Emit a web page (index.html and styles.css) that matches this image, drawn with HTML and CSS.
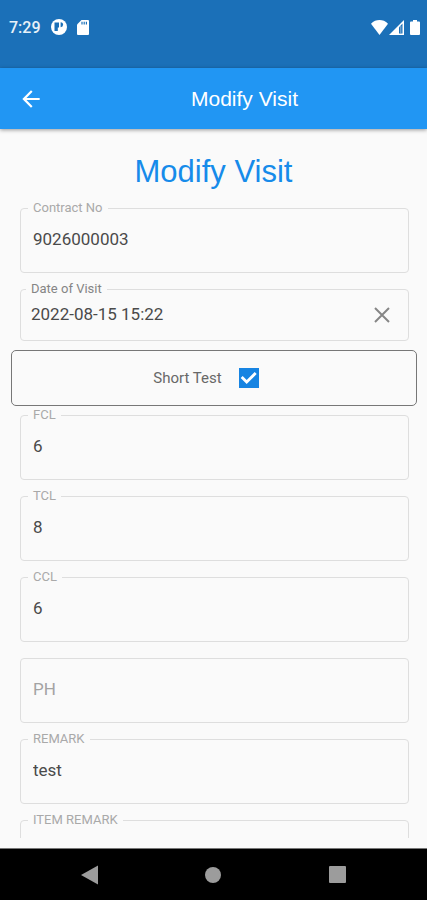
FILE: index.html
```html
<!DOCTYPE html>
<html lang="en">
<head>
<meta charset="utf-8">
<meta name="viewport" content="width=device-width, initial-scale=1">
<title>Modify Visit</title>
<link rel="stylesheet" href="styles.css">
</head>
<body>
<div class="status">
  <span class="time">7:29</span>
  <svg class="status-app" width="16" height="16" viewBox="0 0 16 16" aria-hidden="true"><circle cx="8" cy="8" r="8" fill="#fff"/><path d="M3.500 3.500H8V8.500H6.800V12H3.500z" fill="#1b70b8"/><path d="M9.600 3.200a2.500 2.500 0 0 1 0 5z" fill="#1b70b8"/></svg>
  <svg class="status-card" width="12" height="15" viewBox="0 0 12 15" aria-hidden="true"><path d="M4.500 0H11a1 1 0 0 1 1 1v13a1 1 0 0 1-1 1H1a1 1 0 0 1-1-1V4.500z" fill="#fff"/><path d="M5 1.800v2.700M7.200 1.800v2.700M9.400 1.800v2.700" stroke="#1b70b8" stroke-width="1.200"/></svg>
  <span class="spacer"></span>
  <svg width="17" height="15" viewBox="0 0 17 15" aria-hidden="true"><path d="M8.500 15L0 3.800C2.500 1 5.500 0 8.500 0s6 1 8.500 3.800z" fill="#fff"/></svg>
  <svg class="status-signal" width="15" height="15" viewBox="0 0 15 15" aria-hidden="true"><path d="M0 15L15 0v15z" fill="#fff"/><path d="M10 7.200L13.500 3.500v10H10z" fill="#1b70b8"/><path d="M11.800 6v7.500" stroke="#8db8dc" stroke-width="1"/></svg>
  <svg class="status-battery" width="10" height="15" viewBox="0 0 10 15" aria-hidden="true"><path d="M3 0h4v1.500h2a1 1 0 0 1 1 1V14a1 1 0 0 1-1 1H1a1 1 0 0 1-1-1V2.500a1 1 0 0 1 1-1h2z" fill="#fff"/></svg>
</div>
<header class="appbar">
  <button class="back" type="button" aria-label="Back">
    <svg width="26" height="26" viewBox="0 0 24 24"><path d="M20 11H7.830l5.590-5.590L12 4l-8 8 8 8 1.410-1.410L7.830 13H20z" fill="#fff"/></svg>
  </button>
  <div class="appbar-title">Modify Visit</div>
</header>
<main class="content">
  <h1>Modify Visit</h1>
  <form>
    <div class="field">
      <label for="contract">Contract No</label>
      <input id="contract" type="text" value="9026000003">
    </div>
    <div class="field field-date">
      <label for="date">Date of Visit</label>
      <input id="date" type="text" value="2022-08-15 15:22">
      <button class="clear" type="button" aria-label="Clear date">
        <svg width="16" height="16" viewBox="0 0 16 16"><path d="M1 1l14 14M15 1L1 15" stroke="#868686" stroke-width="2"/></svg>
      </button>
    </div>
    <div class="toggle">
      <label for="short">Short Test</label>
      <input id="short" type="checkbox" checked>
    </div>
    <div class="field">
      <label for="fcl">FCL</label>
      <input id="fcl" type="text" value="6">
    </div>
    <div class="field">
      <label for="tcl">TCL</label>
      <input id="tcl" type="text" value="8">
    </div>
    <div class="field">
      <label for="ccl">CCL</label>
      <input id="ccl" type="text" value="6">
    </div>
    <div class="field">
      <input id="ph" type="text" placeholder="PH" aria-label="PH">
    </div>
    <div class="field">
      <label for="remark">REMARK</label>
      <input id="remark" type="text" value="test">
    </div>
    <div class="field">
      <label for="item">ITEM REMARK</label>
      <input id="item" type="text">
    </div>
  </form>
</main>
<nav class="navbar">
  <button type="button" aria-label="Back"><svg width="18" height="20" viewBox="0 0 18 20"><path d="M0 10L17 0.500v19z" fill="#9c9c9c"/></svg></button>
  <button type="button" aria-label="Home"><svg width="16" height="16" viewBox="0 0 16 16"><circle cx="8" cy="8" r="8" fill="#9c9c9c"/></svg></button>
  <button type="button" aria-label="Recent apps"><svg width="17" height="17" viewBox="0 0 17 17"><rect width="17" height="17" rx="1" fill="#9c9c9c"/></svg></button>
</nav>
</body>
</html>
```
FILE: styles.css
```css
* {
  box-sizing: border-box;
}

body {
  margin: 0;
  height: 100vh;
  display: flex;
  flex-direction: column;
  background: #fafafa;
  color: #444;
  font-family: Roboto, "Liberation Sans", sans-serif;
}

button {
  border: 0;
  padding: 0;
  background: none;
  display: flex;
  align-items: center;
  justify-content: center;
}

svg {
  display: block;
}

.status {
  flex: none;
  height: 68px;
  padding: 0 7px 14px 9px;
  display: flex;
  align-items: center;
  background: #1b70b8;
  color: #e8f1f8;
}

.time {
  font-size: 16px;
  font-weight: 500;
}

.status-app {
  margin-left: 10px;
}

.status-card {
  margin-left: 10px;
}

.spacer {
  flex: 1;
}

.status-signal {
  margin-left: 1px;
}

.status-battery {
  margin-left: 6px;
}

.appbar {
  flex: none;
  height: 61px;
  display: flex;
  align-items: center;
  background: #2196f3;
  color: #fff;
  box-shadow: 0 1px 4px rgba(0, 0, 0, 0.4);
  z-index: 1;
}

.back {
  width: 62px;
  height: 61px;
}

.appbar-title {
  flex: 1;
  text-align: center;
  font-family: "Liberation Sans", sans-serif;
  font-size: 21px;
  line-height: 24px;
}

.content {
  flex: 1;
  min-height: 0;
  overflow: hidden;
  margin-bottom: 10px;
}

h1 {
  margin: 0;
  padding: 25px 0 18px;
  text-align: center;
  font-family: "Liberation Sans", sans-serif;
  font-size: 31px;
  font-weight: 400;
  line-height: 36px;
  color: #168bea;
}

.field {
  position: relative;
  height: 65px;
  margin: 0 18px 16px 20px;
}

.field label {
  position: absolute;
  top: -8px;
  left: 8px;
  padding: 0 5px;
  background: #fafafa;
  font-size: 13px;
  line-height: 16px;
  color: #a9a9a9;
}

.field input {
  width: 100%;
  height: 100%;
  padding: 0 12px 4px;
  border: 1px solid #dedede;
  border-radius: 4px;
  background: transparent;
  color: #4a4a4a;
  font: inherit;
  font-size: 17px;
}

.field input::placeholder {
  color: #a3a3a3;
  opacity: 1;
}

.field-date {
  height: 52px;
  margin-bottom: 9px;
}

.field-date label {
  left: 6px;
  color: #858585;
}

.field-date input {
  padding: 0 48px 2px 10px;
}

.clear {
  position: absolute;
  top: 2px;
  right: 3px;
  width: 48px;
  height: 48px;
}

.toggle {
  height: 56px;
  margin: 0 10px 9px 11px;
  padding-right: 16px;
  display: flex;
  align-items: center;
  justify-content: center;
  gap: 17px;
  border: 1px solid #777;
  border-radius: 5px;
  font-size: 15px;
  color: #686868;
}

.toggle input {
  appearance: none;
  width: 20px;
  height: 20px;
  margin: 0;
  background: #1784e2;
}

.toggle input:checked::before {
  content: "";
  display: block;
  width: 20px;
  height: 20px;
  background: #fff;
  clip-path: polygon(2px 10px, 4px 8px, 8px 12px, 16px 4px, 18px 6px, 8px 16px);
}

.navbar {
  flex: none;
  height: 52px;
  padding: 0 28px;
  display: grid;
  grid-template-columns: repeat(3, 1fr);
  border-top: 1px solid #777;
  background: #000;
}
```
